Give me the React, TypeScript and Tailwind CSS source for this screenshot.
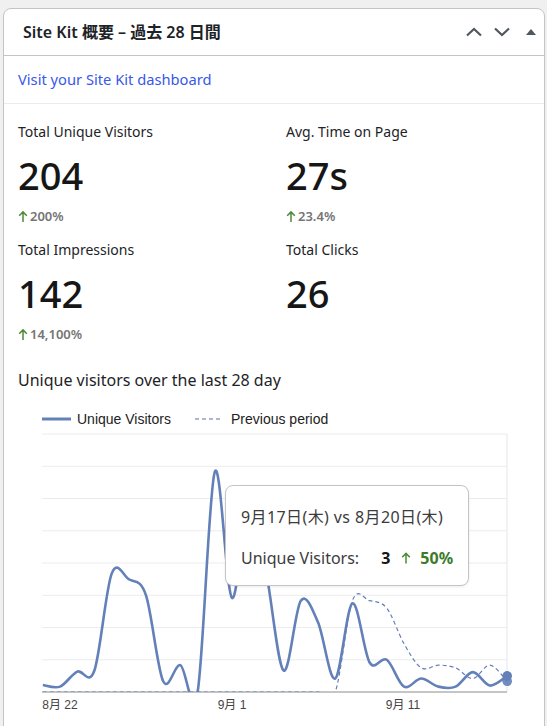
import React from 'react'

// Site Kit dashboard widget (WordPress admin) — overview of the last 28 days.

const UI_FONT = { fontFamily: '"Noto Sans", "Noto Sans CJK JP", sans-serif' }
const CHART_FONT = '"Liberation Sans", "Noto Sans CJK JP", sans-serif'

const LINE = '#6380b8'

// chart geometry, in svg coordinates (svg sits at page x=18, y=400)
const X0 = 24.8
const STEP = 17.2
const BASE = 292
const UNIT = 5.37
const TOP = 34
const RIGHT = 489

const current = [
  1.3, 1, 3.8, 4, 22, 21, 18, 2, 5, 0, 41, 17.5, 36, 22, 4, 17, 13, 2.5, 16.5, 5.5, 6, 1, 2.5, 1, 1, 3.7,
  1.2, 3,
]
const previous = [
  0, 0, 0, 0, 0, 0, 0, 0, 0, 0, 0, 0, 0, 0, 0, 0, 0, 0, 17, 17, 15.6, 9, 4.5, 5, 4.5, 2.5, 5, 2,
]

function smoothPath(vals: number[]) {
  const pts = vals.map((v, i) => [X0 + STEP * i, BASE - v * UNIT])
  let d = `M${pts[0][0]},${pts[0][1]}`
  for (let i = 0; i < pts.length - 1; i++) {
    const p0 = pts[i - 1] ?? pts[i]
    const p1 = pts[i]
    const p2 = pts[i + 1]
    const p3 = pts[i + 2] ?? p2
    const c1x = p1[0] + (p2[0] - p0[0]) / 6
    const c1y = p1[1] + (p2[1] - p0[1]) / 6
    const c2x = p2[0] - (p3[0] - p1[0]) / 6
    const c2y = p2[1] - (p3[1] - p1[1]) / 6
    d += ` C${c1x.toFixed(2)},${c1y.toFixed(2)} ${c2x.toFixed(2)},${c2y.toFixed(2)} ${p2[0].toFixed(2)},${p2[1].toFixed(2)}`
  }
  return d
}

function UpArrow({ className = '' }: { className?: string }) {
  return (
    <svg viewBox="0 0 10 12" className={className} fill="none" stroke="currentColor" strokeWidth="1.5">
      <path d="M5 11.5V1.5M1.2 5.2L5 1.4l3.8 3.8" />
    </svg>
  )
}

function Metric({ label, value, change }: { label: string; value: string; change?: string }) {
  return (
    <div>
      <div className="text-[14px] leading-[20px] text-[#1d2327]">{label}</div>
      <div className="mt-[11px] text-[38px] font-medium leading-[44px] text-[#161616]">{value}</div>
      {change && (
        <div className="mt-[9px] flex items-center text-[13px] leading-[20px] font-semibold text-[#757575]">
          <UpArrow className="mr-[2px] h-[13px] w-[10px] text-[#4c8a35]" />
          {change}
        </div>
      )}
    </div>
  )
}

function Chart() {
  const grid = Array.from({ length: 9 }, (_, k) => TOP + k * 32.25)
  const lastX = X0 + STEP * 27
  return (
    <div className="relative mt-[8px] h-[326px]">
      <svg width="510" height="326" className="block">
        <defs>
          <clipPath id="area">
            <rect x="24" y={TOP - 2} width={RIGHT - 24} height={BASE - TOP + 2} />
          </clipPath>
        </defs>

        {/* legend */}
        <line x1="24" y1="19" x2="53" y2="19" stroke={LINE} strokeWidth="3" />
        <text x="59" y="24" fontFamily={CHART_FONT} fontSize="14" fill="#222">
          Unique Visitors
        </text>
        <line x1="177" y1="19" x2="205" y2="19" stroke="#a9b8da" strokeWidth="2" strokeDasharray="4 3" />
        <text x="213" y="24" fontFamily={CHART_FONT} fontSize="14" fill="#222">
          Previous period
        </text>

        {/* grid */}
        {grid.slice(0, 8).map((y) => (
          <line key={y} x1="24" y1={y} x2={RIGHT} y2={y} stroke="#ececec" strokeWidth="1" />
        ))}
        <line x1={RIGHT} y1={TOP} x2={RIGHT} y2={BASE} stroke="#e6e6e6" strokeWidth="1" />
        <line x1="24" y1={BASE} x2={RIGHT} y2={BASE} stroke="#8c8c8c" strokeWidth="1" />

        <g clipPath="url(#area)">
          <path d={smoothPath(previous)} fill="none" stroke={LINE} strokeWidth="1.2" strokeDasharray="4 3" />
          <path d={smoothPath(current)} fill="none" stroke={LINE} strokeWidth="2.6" />
        </g>

        {/* hovered point */}
        <circle cx={lastX} cy={BASE - 2 * UNIT} r="4.8" fill={LINE} opacity="0.9" />
        <circle cx={lastX} cy={BASE - 3 * UNIT} r="4.8" fill={LINE} />

        {/* x axis */}
        {[
          ['8月 22', 42],
          ['9月 1', 214],
          ['9月 11', 385],
        ].map(([t, x]) => (
          <text key={t} x={x} y="309" textAnchor="middle" fontFamily={CHART_FONT} fontSize="12" fill="#444">
            {t}
          </text>
        ))}
      </svg>

      {/* tooltip */}
      <div className="absolute left-[207px] top-[85px] h-[101px] w-[244px] rounded-[8px] border border-[#c4c4c4] bg-white pl-[15px] text-[#3c3c3c] shadow-[0_1px_3px_rgba(0,0,0,0.08)]">
        <div className="mt-[20px] text-[16px] leading-[22px] tracking-[0.4px]">9月17日(木) vs 8月20日(木)</div>
        <div className="mt-[19px] flex items-center text-[16px] leading-[22px]">
          <span>Unique Visitors:</span>
          <span className="ml-[22px] font-bold text-[#161616]">3</span>
          <UpArrow className="ml-[11px] h-[12px] w-[10px] text-[#4c8a35]" />
          <span className="ml-[9px] font-bold text-[#3c7b2a]">50%</span>
        </div>
      </div>
    </div>
  )
}

export default function App() {
  return (
    <div className="min-h-screen bg-[#f0f0f1] pt-[8px]" style={UI_FONT}>
      <div className="mx-[2px] ml-[3px] h-[740px] overflow-hidden rounded-t-[8px] border border-[#c3c4c7] bg-white">
        <div className="flex h-[47px] items-center border-b border-[#c3c4c7] pl-[19px] pr-[8px]">
          <h2 className="flex-1 text-[16px] font-semibold text-[#1d2327]">Site Kit 概要 – 過去 28 日間</h2>
          <div className="flex items-center text-[#50575e]">
            <svg viewBox="0 0 16 10" className="h-[10px] w-[16px]" fill="none" stroke="currentColor" strokeWidth="2.2">
              <path d="M1 8.5L8 2l7 6.5" />
            </svg>
            <svg viewBox="0 0 16 10" className="ml-[12px] h-[10px] w-[16px]" fill="none" stroke="currentColor" strokeWidth="2.2">
              <path d="M1 1.5L8 8l7-6.5" />
            </svg>
            <svg viewBox="0 0 10 6" className="ml-[16px] h-[6px] w-[10px]" fill="currentColor">
              <path d="M5 0l5 6H0z" />
            </svg>
          </div>
        </div>

        <div className="flex h-[48px] items-center border-b border-[#ececec] px-[14px]">
          <a href="#" className="text-[14.7px] text-[#3858e9]">
            Visit your Site Kit dashboard
          </a>
        </div>

        <div className="px-[14px] pt-[18px]">
          <div className="grid grid-cols-2 gap-x-[24px] gap-y-[14px]">
            <Metric label="Total Unique Visitors" value="204" change="200%" />
            <Metric label="Avg. Time on Page" value="27s" change="23.4%" />
            <Metric label="Total Impressions" value="142" change="14,100%" />
            <Metric label="Total Clicks" value="26" />
          </div>

          <div className="mt-[24px] text-[16px] leading-[24px] text-[#1d2327]">
            Unique visitors over the last 28 day
          </div>

          <Chart />
        </div>
      </div>
    </div>
  )
}
